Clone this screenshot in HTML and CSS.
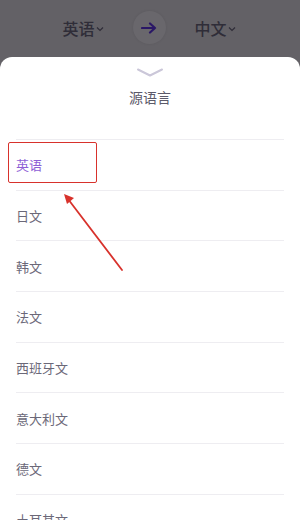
FILE: index.html
```html
<!DOCTYPE html>
<html lang="zh">
<head>
<meta charset="utf-8">
<link rel="stylesheet" href="styles.css">
</head>
<body>
<div class="topbar">
  <div class="lang">英语<svg class="caret" width="8" height="6" viewBox="0 0 8 6"><path d="M1 1.5 L4 4.5 L7 1.5" fill="none" stroke="#2f2d38" stroke-width="1.2"/></svg></div>
  <div class="swap"><svg width="16" height="12" viewBox="0 0 16 12"><path d="M1 6 H14 M9 1.5 L14 6 L9 10.5" fill="none" stroke="#2a1766" stroke-width="2.2" stroke-linecap="round" stroke-linejoin="round"/></svg></div>
  <div class="lang">中文<svg class="caret" width="8" height="6" viewBox="0 0 8 6"><path d="M1 1.5 L4 4.5 L7 1.5" fill="none" stroke="#2f2d38" stroke-width="1.2"/></svg></div>
</div>
<div class="sheet">
  <div class="handle"><svg width="26" height="9" viewBox="0 0 26 9"><path d="M1 1.5 L13 7.5 L25 1.5" fill="none" stroke="#cbc7d9" stroke-width="2" stroke-linecap="round" stroke-linejoin="round"/></svg></div>
  <div class="title">源语言</div>
  <ul class="list">
    <li class="item active">英语</li>
    <li class="item">日文</li>
    <li class="item">韩文</li>
    <li class="item">法文</li>
    <li class="item">西班牙文</li>
    <li class="item">意大利文</li>
    <li class="item">德文</li>
    <li class="item">土耳其文</li>
  </ul>
  <div class="highlight"></div>
  <svg class="pointer" width="300" height="520" viewBox="0 0 300 520">
    <path d="M122 270 L68 199" stroke="#d8322c" stroke-width="1.8" fill="none" stroke-linecap="round"/>
    <path d="M64 194 L74 198 L67 204 Z" fill="#d8322c"/>
  </svg>
</div>
</body>
</html>
```
FILE: styles.css
```css
* { box-sizing: border-box; }
html, body { margin: 0; padding: 0; }
body {
  width: 300px;
  height: 520px;
  overflow: hidden;
  background: #636166;
  font-family: "Noto Sans CJK SC", "Noto Sans", sans-serif;
  position: relative;
}
.topbar {
  height: 57px;
  display: flex;
  align-items: center;
  justify-content: center;
  gap: 29px;
  padding-bottom: 2px;
  padding-right: 2px;
}
.lang {
  display: flex;
  align-items: center;
  font-size: 16px;
  font-weight: 500;
  color: #2f2d38;
  line-height: 1;
}
.caret { margin-left: 1px; margin-top: 2px; }
.swap {
  width: 33px;
  height: 33px;
  border-radius: 50%;
  background: #69676c;
  box-shadow: 0 0 3px rgba(0,0,0,0.08);
  display: flex;
  align-items: center;
  justify-content: center;
}
.sheet {
  background: #fff;
  border-radius: 12px 12px 0 0;
  height: 463px;
  overflow: hidden;
}
.handle {
  display: flex;
  justify-content: center;
  padding-top: 11px;
  height: 22px;
}
.title {
  text-align: center;
  font-size: 14px;
  color: #5c5a6a;
  line-height: 20px;
  margin-top: 8px;
  height: 52px;
}
.list {
  list-style: none;
  margin: 0;
  padding: 0 16px;
}
.item {
  height: 50.7px;
  border-top: 1px solid #eeedf1;
  display: flex;
  align-items: center;
  font-size: 13px;
  color: #6b6878;
}
.item.active { color: #8e5fd6; }
.highlight {
  position: absolute;
  left: 8px;
  top: 142px;
  width: 89px;
  height: 41px;
  border: 1.5px solid #d8322c;
  border-radius: 2px;
}
.pointer {
  position: absolute;
  left: 0;
  top: 0;
  pointer-events: none;
}
```
